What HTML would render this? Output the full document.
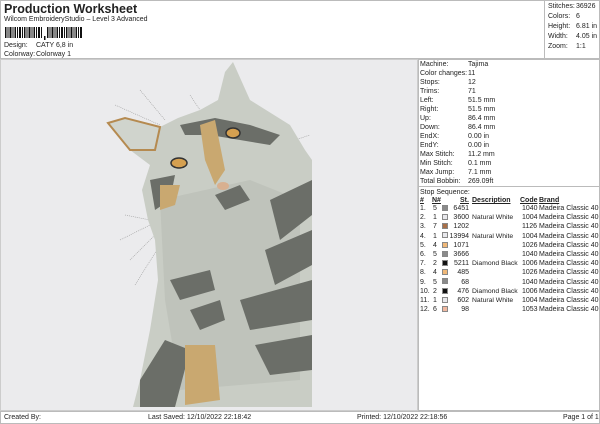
<!DOCTYPE html>
<html><head><meta charset="utf-8"><style>
*{margin:0;padding:0;box-sizing:border-box}
body{width:600px;height:424px;background:#fff;font-family:"Liberation Sans",sans-serif;font-size:7px;color:#222;position:relative;overflow:hidden}
.a{position:absolute;white-space:nowrap;line-height:9px}
.b{position:absolute;border:1px solid #bbb}
.u{text-decoration:underline;font-weight:bold}
.sw{position:absolute;width:6px;height:6px;border:1px solid #888}
</style></head><body>
<div class="b" style="left:0;top:0;width:600px;height:59px"></div>
<div class="b" style="left:544px;top:0;width:56px;height:59px"></div>
<div class="a" style="left:4px;top:2px;font-size:12.5px;font-weight:bold;line-height:14px">Production Worksheet</div>
<div class="a" style="left:4px;top:15px">Wilcom EmbroideryStudio – Level 3 Advanced</div>
<svg style="position:absolute;left:5px;top:27px" width="80" height="14">
<g fill="#111">
<rect x="0" y="0" width="1.5" height="11"/><rect x="2.5" y="0" width="1" height="11"/><rect x="4.5" y="0" width="2" height="11"/><rect x="7.5" y="0" width="1" height="11"/><rect x="9.5" y="0" width="1.5" height="11"/><rect x="12" y="0" width="1" height="11"/><rect x="14" y="0" width="2" height="11"/><rect x="17" y="0" width="1" height="11"/><rect x="19" y="0" width="1.5" height="11"/><rect x="21.5" y="0" width="1" height="11"/><rect x="23.5" y="0" width="2" height="11"/><rect x="26.5" y="0" width="1" height="11"/><rect x="28.5" y="0" width="1.5" height="11"/><rect x="31" y="0" width="1" height="11"/><rect x="33" y="0" width="2" height="11"/><rect x="36" y="0" width="1" height="11"/>
<rect x="39" y="9" width="1.5" height="4"/>
<rect x="42" y="0" width="1.5" height="11"/><rect x="44.5" y="0" width="1" height="11"/><rect x="46.5" y="0" width="2" height="11"/><rect x="49.5" y="0" width="1" height="11"/><rect x="51.5" y="0" width="1.5" height="11"/><rect x="54" y="0" width="1" height="11"/><rect x="56" y="0" width="2" height="11"/><rect x="59" y="0" width="1" height="11"/><rect x="61" y="0" width="1.5" height="11"/><rect x="63.5" y="0" width="1" height="11"/><rect x="65.5" y="0" width="2" height="11"/><rect x="68.5" y="0" width="1" height="11"/><rect x="70.5" y="0" width="1.5" height="11"/><rect x="73" y="0" width="1" height="11"/><rect x="75" y="0" width="2" height="11"/>
</g></svg>
<div class="a" style="left:4px;top:41px">Design:</div><div class="a" style="left:36px;top:41px">CATY 6,8 in</div>
<div class="a" style="left:4px;top:50px">Colorway:</div><div class="a" style="left:36px;top:50px">Colorway 1</div>
<div class="a" style="left:548px;top:2px;line-height:10px">Stitches:<br>Colors:<br>Height:<br>Width:<br>Zoom:</div>
<div class="a" style="left:576px;top:2px;line-height:10px">36926<br>6<br>6.81 in<br>4.05 in<br>1:1</div>

<div style="position:absolute;left:0;top:59px;width:418px;height:352px;background:#ebebed;border:1px solid #ccc"></div>
<svg style="position:absolute;left:0;top:59px" width="418" height="352" viewBox="0 59 418 352">
<g stroke="#999" stroke-width="0.6" stroke-dasharray="1,1" fill="none">
<path d="M140 90 L165 120 M115 105 L160 125 M190 95 L200 110 M125 215 L150 220 M120 240 L150 225 M130 260 L155 235 M135 285 L160 245 M295 140 L310 135"/>
</g>
<path d="M233 62 L250 100 L290 125 L305 150 L312 160 L312 407 L133 407 L140 380 L150 330 L158 280 L155 240 L148 220 L142 190 L150 165 L130 150 L108 123 L125 118 L160 127 L178 118 L200 110 L218 100 L225 72 Z" fill="#c9cdc5"/>
<path d="M160 200 L250 180 L300 200 L300 380 L180 390 L165 300 Z" fill="#bfc3bb"/>
<path d="M108 123 L125 118 L160 127 L155 150 L130 150 Z" fill="#d0d4cd" stroke="#b58a50" stroke-width="2"/>
<g fill="#6b6e68">
<path d="M180 125 L215 118 L250 125 L280 135 L270 145 L240 140 L210 135 L185 135 Z"/>
<path d="M270 200 L312 180 L312 215 L280 240 Z"/>
<path d="M265 250 L312 230 L312 265 L275 285 Z"/>
<path d="M240 300 L312 280 L312 320 L250 330 Z"/>
<path d="M255 345 L312 335 L312 370 L270 375 Z"/>
<path d="M140 380 L165 340 L190 350 L175 407 L140 407 Z"/>
<path d="M170 280 L210 270 L215 290 L180 300 Z"/>
<path d="M190 310 L220 300 L225 320 L200 330 Z"/>
<path d="M215 195 L240 185 L250 200 L225 210 Z"/>
<path d="M150 180 L175 175 L170 200 L155 210 Z"/>
</g>
<g fill="#c9a870">
<path d="M200 125 L215 120 L225 170 L215 185 L205 160 Z"/>
<path d="M160 185 L180 185 L175 205 L160 210 Z"/>
<path d="M185 345 L215 345 L220 400 L185 405 Z"/>
</g>
<ellipse cx="233" cy="133" rx="7" ry="5" fill="#d5a050" stroke="#333" stroke-width="1.5"/>
<ellipse cx="179" cy="163" rx="8" ry="5" fill="#d5a050" stroke="#333" stroke-width="1.5"/>
<ellipse cx="223" cy="186" rx="6" ry="4" fill="#d8b090"/>
</svg>

<div class="b" style="left:418px;top:59px;width:182px;height:352px"></div>
<div style="position:absolute;left:418px;top:186px;width:182px;border-top:1px solid #bbb"></div>
<div class="a" style="left:420px;top:60px">Machine:<br>Color changes:<br>Stops:<br>Trims:<br>Left:<br>Right:<br>Up:<br>Down:<br>EndX:<br>EndY:<br>Max Stitch:<br>Min Stitch:<br>Max Jump:<br>Total Bobbin:</div>
<div class="a" style="left:468px;top:60px">Tajima<br>11<br>12<br>71<br>51.5 mm<br>51.5 mm<br>86.4 mm<br>86.4 mm<br>0.00 in<br>0.00 in<br>11.2 mm<br>0.1 mm<br>7.1 mm<br>269.09ft</div>
<div class="a" style="left:420px;top:188px">Stop Sequence:</div>
<div class="a u" style="left:420px;top:196px">#</div><div class="a u" style="left:432px;top:196px">N#</div><div class="a u" style="left:460px;top:196px">St.</div><div class="a u" style="left:472px;top:196px">Description</div><div class="a u" style="left:520px;top:196px">Code</div><div class="a u" style="left:539px;top:196px">Brand</div>
<div class="a" style="left:420px;top:204px;line-height:9.2px">1.<br>2.<br>3.<br>4.<br>5.<br>6.<br>7.<br>8.<br>9.<br>10.<br>11.<br>12.</div>
<div class="a" style="left:433px;top:204px;line-height:9.2px">5<br>1<br>7<br>1<br>4<br>5<br>2<br>4<br>5<br>2<br>1<br>6</div>
<div class="a" style="left:446px;top:204px;width:23px;text-align:right;line-height:9.2px">6451<br>3600<br>1202<br>13994<br>1071<br>3666<br>5211<br>485<br>68<br>476<br>602<br>98</div>
<div class="a" style="left:472px;top:204px;line-height:9.2px;font-size:6.8px"><br>Natural White<br><br>Natural White<br><br><br>Diamond Black<br><br><br>Diamond Black<br>Natural White<br></div>
<div class="a" style="left:522px;top:204px;line-height:9.2px">1040<br>1004<br>1126<br>1004<br>1026<br>1040<br>1006<br>1026<br>1040<br>1006<br>1004<br>1053</div>
<div class="a" style="left:539px;top:204px;line-height:9.2px">Madeira Classic 40<br>Madeira Classic 40<br>Madeira Classic 40<br>Madeira Classic 40<br>Madeira Classic 40<br>Madeira Classic 40<br>Madeira Classic 40<br>Madeira Classic 40<br>Madeira Classic 40<br>Madeira Classic 40<br>Madeira Classic 40<br>Madeira Classic 40</div>
<div class="sw" style="left:442px;top:205px;background:#8a8a8a"></div>
<div class="sw" style="left:442px;top:214px;background:#e8e8ec"></div>
<div class="sw" style="left:442px;top:223px;background:#a87048"></div>
<div class="sw" style="left:442px;top:232px;background:#e8e8ec"></div>
<div class="sw" style="left:442px;top:242px;background:#f0b878"></div>
<div class="sw" style="left:442px;top:251px;background:#8a8a8a"></div>
<div class="sw" style="left:442px;top:260px;background:#111"></div>
<div class="sw" style="left:442px;top:269px;background:#f0b878"></div>
<div class="sw" style="left:442px;top:278px;background:#8a8a8a"></div>
<div class="sw" style="left:442px;top:288px;background:#111"></div>
<div class="sw" style="left:442px;top:297px;background:#e8e8ec"></div>
<div class="sw" style="left:442px;top:306px;background:#f0b8a0"></div>

<div class="b" style="left:0;top:411px;width:600px;height:13px"></div>
<div class="a" style="left:4px;top:413px">Created By:</div>
<div class="a" style="left:148px;top:413px">Last Saved: 12/10/2022 22:18:42</div>
<div class="a" style="left:357px;top:413px">Printed: 12/10/2022 22:18:56</div>
<div class="a" style="left:563px;top:413px">Page 1 of 1</div>
</body></html>
